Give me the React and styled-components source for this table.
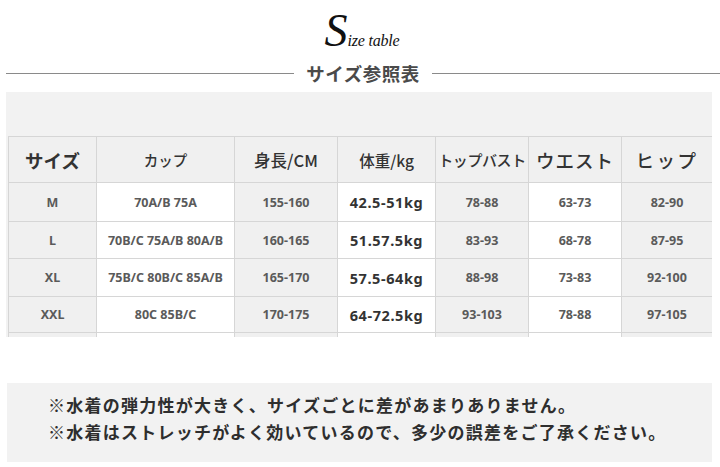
import React from "react";
import styled, { createGlobalStyle } from "styled-components";

const GlobalStyle = createGlobalStyle`
  html, body {
    margin: 0;
    padding: 0;
    background: #ffffff;
  }
  body {
    font-family: "Noto Sans CJK JP", "Noto Sans", sans-serif;
  }
`;

const Page = styled.div`
  width: 720px;
  height: 467px;
  overflow: hidden;
  display: flex;
  flex-direction: column;
`;

const Heading = styled.div`
  height: 60px;
  display: flex;
  justify-content: center;
  align-items: flex-end;
  padding-left: 4px;
  box-sizing: border-box;
`;

const Script = styled.div`
  font-family: "Liberation Serif", "DejaVu Serif", serif;
  font-style: italic;
  color: #111;
  display: flex;
  align-items: baseline;
  line-height: 1.15;
  padding-bottom: 2px;
`;

const BigS = styled.span`
  font-size: 46px;
  font-weight: 400;
`;

const SmallWord = styled.span`
  font-size: 16px;
  letter-spacing: -0.2px;
`;

const TitleRow = styled.div`
  display: flex;
  align-items: center;
  gap: 12px;
  height: 26px;
  padding-left: 6px;
`;

const Rule = styled.div`
  flex: 1;
  height: 1px;
  background: #8a8a8a;
`;

const Title = styled.div`
  font-size: 18.5px;
  font-weight: 700;
  color: #4a4a4a;
  letter-spacing: 0.5px;
`;

const Panel = styled.div`
  margin: 6px 8px 0 6px;
  height: 245px;
  overflow: hidden;
  background: #f2f2f2;
  padding: 44px 0 0 2px;
  box-sizing: border-box;
`;

const Table = styled.table`
  border-collapse: collapse;
  table-layout: fixed;
  width: 704px;
`;

const Row = styled.tr`
  height: ${({ $h }) => $h}px;
`;

const HeadCell = styled.th`
  border: 1px solid #d6d6d6;
  background: #f0f0f0;
  color: #333;
  font-size: ${({ $size }) => $size || 15}px;
  font-weight: ${({ $bold }) => ($bold ? 700 : 500)};
  letter-spacing: ${({ $ls }) => $ls || 0}px;
  white-space: nowrap;
  text-align: center;
  padding: 0;
  overflow: hidden;
`;

const Cell = styled.td`
  border: 1px solid #d6d6d6;
  background: ${({ $shade }) => ($shade ? "#f0f0f0" : "#ffffff")};
  color: ${({ $strong }) => ($strong ? "#333" : "#5a5a5a")};
  font-family: "Noto Sans", "Noto Sans CJK JP", sans-serif;
  font-size: ${({ $strong }) => ($strong ? 14.5 : 12.5)}px;
  font-weight: 700;
  letter-spacing: ${({ $strong }) => ($strong ? 0.6 : 0)}px;
  white-space: nowrap;
  text-align: center;
  padding: 0;
`;

const Notes = styled.div`
  margin: 46px 8px 0 7px;
  height: 79px;
  background: #f2f2f2;
  padding: 10px 0 0 41px;
  box-sizing: border-box;
  display: flex;
  flex-direction: column;
  gap: 3px;
`;

const NoteLine = styled.div`
  font-size: 17px;
  font-weight: 700;
  color: #2e2e2e;
  letter-spacing: 1.25px;
  line-height: 24px;
  white-space: nowrap;
`;

const COLS = [88, 138, 103, 98, 93, 93, 91];

const HEADERS = [
  { label: "サイズ", size: 18.5, bold: true },
  { label: "カップ", size: 14.5 },
  { label: "身長/CM", size: 16.5 },
  { label: "体重/kg", size: 15.5 },
  { label: "トップバスト", size: 15, ls: -0.4 },
  { label: "ウエスト", size: 18.5, ls: 1 },
  { label: "ヒップ", size: 18.5, ls: 2.5 },
];

const ROWS = [
  { h: 39, cells: ["M", "70A/B 75A", "155-160", "42.5-51kg", "78-88", "63-73", "82-90"] },
  { h: 37, cells: ["L", "70B/C 75A/B 80A/B", "160-165", "51.57.5kg", "83-93", "68-78", "87-95"] },
  { h: 38, cells: ["XL", "75B/C 80B/C 85A/B", "165-170", "57.5-64kg", "88-98", "73-83", "92-100"] },
  { h: 36, cells: ["XXL", "80C 85B/C", "170-175", "64-72.5kg", "93-103", "78-88", "97-105"] },
  { h: 30, cells: ["", "", "", "", "", "", ""] },
];

const SHADED = [true, false, true, false, true, false, true];

const App = () => (
  <Page>
    <GlobalStyle />
    <Heading>
      <Script>
        <BigS>S</BigS>
        <SmallWord>ize table</SmallWord>
      </Script>
    </Heading>
    <TitleRow>
      <Rule />
      <Title>サイズ参照表</Title>
      <Rule />
    </TitleRow>
    <Panel>
      <Table>
        <colgroup>
          {COLS.map((w, i) => (
            <col key={i} style={{ width: w }} />
          ))}
        </colgroup>
        <thead>
          <Row $h={46}>
            {HEADERS.map((h) => (
              <HeadCell key={h.label} $size={h.size} $bold={h.bold} $ls={h.ls}>
                {h.label}
              </HeadCell>
            ))}
          </Row>
        </thead>
        <tbody>
          {ROWS.map((row, r) => (
            <Row key={r} $h={row.h}>
              {row.cells.map((c, i) => (
                <Cell key={i} $shade={SHADED[i]} $strong={i === 3}>
                  {c}
                </Cell>
              ))}
            </Row>
          ))}
        </tbody>
      </Table>
    </Panel>
    <Notes>
      <NoteLine>※水着の弾力性が大きく、サイズごとに差があまりありません。</NoteLine>
      <NoteLine>※水着はストレッチがよく効いているので、多少の誤差をご了承ください。</NoteLine>
    </Notes>
  </Page>
);

export default App;
